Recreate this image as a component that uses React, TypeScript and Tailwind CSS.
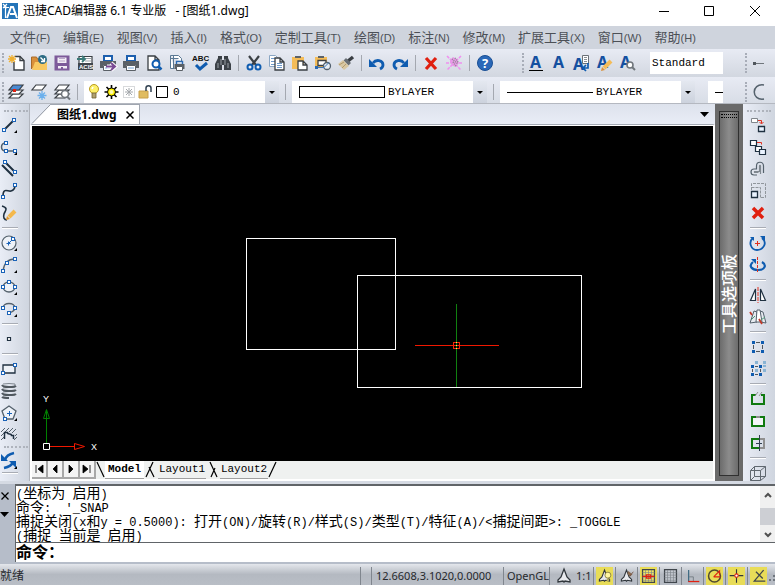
import React from 'react'
import type { ReactNode } from 'react'

const BLUE = '#0f5cb0'
const DARK = '#3a3f44'
const INK = '#1f3040'

interface Tool {
  label: string
  icon: ReactNode
}

/* ---------- shared icon pieces ---------- */

// small square grip used on the end points of the draw tools
const Node = ({ x, y }: { x: number; y: number }) => (
  <rect x={x - 1.5} y={y - 1.5} width="3" height="3" fill="#fff" stroke="#1b63b8" strokeWidth="1" />
)

const Flyout = () => <path d="M17 16v3h-3z" fill="#000" />

const Letter = ({ x = 2, y = 15 }: { x?: number; y?: number }) => (
  <text x={x} y={y} fontSize="16" fontWeight="700" fontFamily="Noto Sans, sans-serif" fill="#1450a0">
    A
  </text>
)

const PrinterBody = () => (
  <>
    <path d="M6 3h8v5H6z" fill="#fff" stroke="#1d5fae" strokeWidth="2" />
    <path d="M2 8h16v7h-3v-3H5v3H2z" fill="#5a6066" />
    <path d="M5.500 12.500h9v5h-9z" fill="#fff" stroke="#5a6066" />
    <path d="M7 15h6" stroke="#78a8d8" />
  </>
)

const Page = ({ x, y, w = 9, h = 12 }: { x: number; y: number; w?: number; h?: number }) => (
  <path
    d={`M${x} ${y}h${w - 4}l4 4v${h - 4}h-${w}zM${x + w - 4} ${y}v4h4`}
    fill="#fff"
    stroke={DARK}
    strokeWidth="1.3"
  />
)

const LayerStack = ({ top = '#fff' }: { top?: string }) => (
  <>
    <path d="M7 12h10l-4 4H3z" fill="#fff" stroke={DARK} strokeWidth="1.2" />
    <path d="M7 8h10l-4 4H3z" fill="#fff" stroke={DARK} strokeWidth="1.2" />
    <path d="M7 3h10l-4 5H3z" fill={top} stroke={DARK} strokeWidth="1.2" />
  </>
)

/* ---------- standard toolbar ---------- */

const standardTools: Tool[][] = [
  [
    {
      label: '新建',
      icon: (
        <>
          <path d="M9 3.500h5l4 4v9.500H8V9" fill="#fff" stroke={DARK} strokeWidth="1.400" />
          <path d="M14 3.500v4h4" fill="none" stroke={DARK} strokeWidth="1.400" />
          <path d="M6 2v8M2 6h8M3 3l6 6M9 3l-6 6" stroke="#f0b030" strokeWidth="1.300" />
        </>
      ),
    },
    {
      label: '打开',
      icon: (
        <>
          <path d="M2.500 16V4h5l1 2h3v5" fill="#d9903a" stroke="#a86a28" />
          <path d="M3 17l3-8h12v8z" fill="#f8c860" />
          <circle cx="13.500" cy="6.500" r="4.500" fill="#2c6b84" />
          <path d="M11.500 4.500l4 4m0-3.500v3.500h-3.500" stroke="#fff" strokeWidth="1.300" fill="none" />
        </>
      ),
    },
    {
      label: '保存',
      icon: (
        <>
          <path d="M3.500 3.500h13v13h-13z" fill="#f3edf6" stroke="#7d5a9a" strokeWidth="2" />
          <path d="M3 3h2.500v7h9V3H17v14h-2v-4H6v4H3z" fill="#7d5a9a" />
          <path d="M7 5.500h6M7 8h6" stroke="#b9a6c8" />
          <path d="M9 14h2v3H9z" fill="#7d5a9a" />
        </>
      ),
    },
    {
      label: '导入 ACIS',
      icon: (
        <>
          <path d="M4 3.500h13v13H4z" fill="#fff" stroke={DARK} strokeWidth="1.200" />
          <path d="M10 5.500h6M10 8h6" stroke="#9aa2a8" />
          <path d="M2 6h7M7 3l3 3-3 3" stroke="#3a7a78" strokeWidth="1.800" fill="none" />
          <path d="M3 10h15v7H3z" fill="#40464c" />
          <text x="4" y="16" fontSize="6" fontWeight="700" fontFamily="Liberation Sans, sans-serif" fill="#fff">
            ACIS
          </text>
        </>
      ),
    },
    {
      label: '输出',
      icon: (
        <>
          <PrinterBody />
          <path d="M9 13.500h7M13 10l4 3.500-4 3.500" stroke="#fff" strokeWidth="4" fill="none" />
          <path d="M8 13.500h8M13 10l4 3.500-4 3.500" stroke="#7a4b94" strokeWidth="2" fill="none" />
        </>
      ),
    },
    { label: '打印', icon: <PrinterBody /> },
    {
      label: '打印预览',
      icon: (
        <>
          <Page x={4} y={3} w={11} h={14} />
          <circle cx="12" cy="11" r="3.500" fill="#fff" stroke={BLUE} strokeWidth="2" />
          <path d="M14.500 13.500l3 3" stroke={BLUE} strokeWidth="2.500" />
        </>
      ),
    },
    {
      label: '页面设置',
      icon: (
        <>
          <path d="M3.500 2.500h8l3 3v3M3.500 2.500v13h4M6.500 2.500v13M3.500 5.500h8" fill="#fff" stroke="#5a7894" />
          <path d="M9.500 8.500h6v3h-6z" fill="#fff" stroke="#2b68b0" strokeWidth="1.400" />
          <path d="M7.500 11h10v5h-10z" fill="#5a6066" />
          <path d="M9.500 13.500h6v4h-6z" fill="#fff" stroke="#5a6066" />
        </>
      ),
    },
    {
      label: '拼写检查',
      icon: (
        <>
          <text x="2" y="8" fontSize="8" fontWeight="700" fontFamily="Liberation Sans, sans-serif" fill="#111">
            ABC
          </text>
          <path d="M6 12l4 4 7-6" stroke={BLUE} strokeWidth="3" fill="none" />
        </>
      ),
    },
    {
      label: '查找',
      icon: (
        <>
          <path d="M5 3h4v3H5zM11 3h4v3h-4z" fill={DARK} />
          <path d="M5 5h4v12H2v-6zM11 5h4l3 6v6h-7zM8 7h4v5H8z" fill="#3c4248" />
          <path d="M5 10v5M8 6v6M12 6v6M15 10v5" stroke="#9aa0a6" />
        </>
      ),
    },
  ],
  [
    {
      label: '剪切',
      icon: (
        <>
          <path d="M5 3l7 9M15 3l-7 9" stroke={DARK} strokeWidth="2.200" />
          <circle cx="6" cy="14" r="2.500" fill="#e8ebf4" stroke={BLUE} strokeWidth="2" />
          <circle cx="14" cy="14" r="2.500" fill="#e8ebf4" stroke={BLUE} strokeWidth="2" />
        </>
      ),
    },
    {
      label: '复制',
      icon: (
        <>
          <path d="M2.500 2.500h6l2 2v9h-8z" fill="#fff" stroke="#8aa6c4" />
          <path d="M4 5.500h4M4 8.500h4M4 11.500h4" stroke="#6f9acb" />
          <Page x={8} y={5} w={9} h={12} />
          <path d="M10 10.500h5M10 12.500h5M10 14.500h5" stroke="#6f9acb" />
        </>
      ),
    },
    {
      label: '粘贴',
      icon: (
        <>
          <path d="M2 4h12v12H2z" fill="#f4bc58" />
          <path d="M5 3h6v2H5z" fill="#5c6268" />
          <Page x={8} y={8} w={9} h={9} />
        </>
      ),
    },
    {
      label: '粘贴为块',
      icon: (
        <>
          <path d="M2 4h12v11H2z" fill="#f4bc58" />
          <path d="M5 3h6v2H5z" fill="#5c6268" />
          <path d="M5 7.500h8v5H5z" fill="#fff" stroke={DARK} strokeWidth="1.300" />
          <circle cx="14" cy="13" r="3.500" fill="#e8eef6" stroke="#52606e" strokeWidth="1.300" />
          <path d="M3 14.500h8l5-5" stroke="#3d78b8" fill="none" />
          <path d="M2 13h3v3H2z" fill="#2b68b0" />
        </>
      ),
    },
    {
      label: '特性匹配',
      icon: (
        <>
          <path d="M17 4l-5 4" stroke={DARK} strokeWidth="3.500" />
          <path d="M10 5l5 5-2.500 2.500-5-5z" fill="#686e74" />
          <path d="M7 7l6 6-5 4-6-6z" fill="#d8c7a2" />
          <path d="M3 12l5-3M6 15l4-4" stroke="#b29b6e" />
        </>
      ),
    },
  ],
  [
    {
      label: '撤销',
      icon: (
        <>
          <path d="M6 10c3-4 10-3 10 2 0 2-1 3-3 4" fill="none" stroke={BLUE} strokeWidth="2.800" />
          <path d="M2 6v8h8z" fill={BLUE} />
        </>
      ),
    },
    {
      label: '重做',
      icon: (
        <>
          <path d="M14 10c-3-4-10-3-10 2 0 2 1 3 3 4" fill="none" stroke={BLUE} strokeWidth="2.800" />
          <path d="M18 6v8h-8z" fill={BLUE} />
        </>
      ),
    },
  ],
  [
    {
      label: '删除',
      icon: <path d="M5 5l10 11M15 5L5 16" stroke="#e02010" strokeWidth="3.200" />,
    },
    {
      label: '清理',
      icon: (
        <>
          <path d="M3 3l14 14M17 3L3 17M2 10h3M15 10h3" stroke="#f090f0" strokeWidth="1.500" strokeDasharray="3 1" />
          <path d="M6 7l3-3 4 2 2 4-3 4-3-1-3-3z" fill="#e898e8" />
          <path d="M8 6l6 5M11 5l3 4M9 9l3 4" stroke="#908890" strokeWidth="1.500" strokeDasharray="1 1" />
        </>
      ),
    },
  ],
  [
    {
      label: '帮助',
      icon: (
        <>
          <circle cx="10" cy="10" r="7.500" fill="#2a68b8" stroke="#1a4f94" />
          <text x="7" y="15" fontSize="13" fontWeight="700" fontFamily="Noto Sans, sans-serif" fill="#fff">
            ?
          </text>
        </>
      ),
    },
  ],
]

const textTools: Tool[] = [
  {
    label: '多行文字',
    icon: (
      <>
        <Letter x={4} />
        <path d="M3 17.500h14" stroke="#000" />
      </>
    ),
  },
  { label: '单行文字', icon: <Letter x={4} /> },
  {
    label: '编辑文字',
    icon: (
      <>
        <Letter x={1} y={17} />
        <path d="M10.500 2.500h6v8h-6z" fill="#fff" stroke="#6a7076" />
        <path d="M12 4.500h3M12 6.500h3M12 8.500h3" stroke="#8a9096" />
        <path d="M16 10v5h-4m2-3l-3 3 3 3" stroke={BLUE} strokeWidth="1.700" fill="none" />
      </>
    ),
  },
  {
    label: '文字样式',
    icon: (
      <>
        <Letter x={2} />
        <path d="M16 8l-7 7" stroke="#f4bc58" strokeWidth="4" />
        <path d="M6 18l1-4 3 3z" fill="#d9903a" />
      </>
    ),
  },
  {
    label: '查找文字',
    icon: (
      <>
        <Letter x={2} />
        <circle cx="12" cy="12" r="3" fill="#fff" stroke="#70767c" strokeWidth="1.600" />
        <path d="M14 14l3 3" stroke="#70767c" strokeWidth="2" />
      </>
    ),
  },
]

const layerTools: Tool[] = [
  {
    label: '图层',
    icon: (
      <>
        <LayerStack top="#4a8ad4" />
        <path d="M7 7h3v3H7z" fill="#e02010" />
      </>
    ),
  },
  {
    label: '冻结图层',
    icon: (
      <>
        <path d="M7 3h10l-4 5H3z" fill="#fff" stroke={DARK} strokeWidth="1.200" />
        <path d="M13 9v9M8.500 13.500h9M10 10.500l6 6M16 10.500l-6 6" stroke="#6cb0ec" strokeWidth="1.300" />
      </>
    ),
  },
  {
    label: '图层查找',
    icon: (
      <>
        <LayerStack />
        <circle cx="13" cy="12" r="3.500" fill="#fff" stroke="#70767c" strokeWidth="1.600" />
        <path d="M15 14.500l3 3" stroke="#70767c" strokeWidth="2" />
      </>
    ),
  },
]

/* ---------- draw / modify side bars ---------- */

const drawTools: Tool[][] = [
  [
    {
      label: '直线',
      icon: (
        <>
          <path d="M4 16L14 6" stroke={INK} strokeWidth="2" />
          <Node x={4} y={16} />
          <Node x={14} y={6} />
          <Flyout />
        </>
      ),
    },
    {
      label: '多段线',
      icon: (
        <>
          <path d="M6 7C0 7 0 15 6 15h9" fill="none" stroke="#50606e" strokeWidth="1.500" />
          <Node x={6} y={7} />
          <Node x={6} y={15} />
          <Node x={15} y={15} />
          <Flyout />
        </>
      ),
    },
    {
      label: '多线',
      icon: (
        <>
          <path d="M2 7l11 11M5 4l10 10" stroke={INK} strokeWidth="2" />
          <Node x={5} y={4} />
          <Node x={15} y={14} />
        </>
      ),
    },
    {
      label: '样条曲线',
      icon: (
        <>
          <path d="M3 16c0-9 5-4 8-5 4-1 4-4 4-6" fill="none" stroke={INK} strokeWidth="1.600" />
          <Node x={3} y={17} />
          <Node x={15} y={5} />
        </>
      ),
    },
    {
      label: '徒手画',
      icon: (
        <>
          <path d="M2 4c7 2 3 5 2 8-1 3 0 6 3 6" fill="none" stroke={INK} strokeWidth="1.600" />
          <path d="M15 9l-6 6" stroke="#f4b84c" strokeWidth="4" />
          <path d="M6 18l1-4 3 3z" fill="#e0962c" />
        </>
      ),
    },
  ],
  [
    {
      label: '圆',
      icon: (
        <>
          <circle cx="9" cy="11" r="7" fill="#eef2f8" stroke="#54616c" strokeWidth="1.200" />
          <path d="M9 11l4-4M6.500 11.500h4M8.500 9.500v4" stroke="#1b63b8" />
          <Node x={13} y={7} />
          <Flyout />
        </>
      ),
    },
    {
      label: '圆弧',
      icon: (
        <>
          <path d="M3 17C4 9 8 5 15 5" fill="none" stroke="#54616c" strokeWidth="1.300" />
          <Node x={3} y={17} />
          <Node x={7} y={9} />
          <Node x={15} y={5} />
          <Flyout />
        </>
      ),
    },
    {
      label: '椭圆',
      icon: (
        <>
          <ellipse cx="9" cy="11" rx="6" ry="5" fill="#eef2f8" stroke="#54616c" strokeWidth="1.300" />
          <Node x={3} y={11} />
          <Node x={15} y={11} />
          <Node x={9} y={6} />
          <Flyout />
        </>
      ),
    },
    {
      label: '椭圆弧',
      icon: (
        <>
          <path d="M3 10C3 4 15 4 15 10c0 3-3 4-6 5" fill="none" stroke="#54616c" strokeWidth="1.300" />
          <Node x={3} y={10} />
          <Node x={15} y={10} />
          <Node x={9} y={15} />
          <Flyout />
        </>
      ),
    },
  ],
  [{ label: '点', icon: <path d="M7.500 9.500h3v3h-3z" fill="#fff" stroke={INK} strokeWidth="1.200" /> }],
  [
    {
      label: '矩形',
      icon: (
        <>
          <path d="M3 7h12v8H3z" fill="#eef2f8" stroke={INK} strokeWidth="1.300" />
          <Node x={3} y={15} />
          <Node x={15} y={7} />
        </>
      ),
    },
    {
      label: '螺旋',
      icon: (
        <>
          <path d="M3 4q6-1 12 0v2M15 7l-12 1M15 11l-12 1M15 15l-12 1" stroke="#808890" fill="none" />
          <path
            d="M2 5q1 2 7 2t7-1M2 9q1 2 7 2t7-1M2 13q1 2 7 2t7-1M2 17q1 1 7 1"
            stroke="#50585f"
            strokeWidth="2"
            fill="none"
          />
        </>
      ),
    },
    {
      label: '多边形',
      icon: (
        <>
          <path d="M9 4l7 5-3 8H5L2 9z" fill="#eef2f8" stroke="#54616c" strokeWidth="1.300" />
          <path d="M7 11.500h5M9.500 9v5" stroke="#1b63b8" />
          <Node x={5} y={17} />
          <Flyout />
        </>
      ),
    },
    {
      label: '图案填充',
      icon: (
        <>
          <path d="M1 8l4-4M1 12l8-8M1 16l3-3M9 8l4-4M12 9l4-4M15 12l2-2M14 16l3-3" stroke="#54616c" />
          <path d="M4.500 15V8.500h3c0 3 4 0 4 3h2V15" fill="none" stroke={INK} strokeWidth="1.500" />
        </>
      ),
    },
  ],
]

const syncTool: Tool = {
  label: '重生成',
  icon: (
    <>
      <path d="M5 10c1-4 4-6 9-7" fill="none" stroke={BLUE} strokeWidth="2.500" />
      <path d="M1 4v7h7z" fill={BLUE} />
      <path d="M13 12c-1 3-4 5-9 6" fill="none" stroke={BLUE} strokeWidth="2.500" />
      <path d="M16 18v-7h-7z" fill={BLUE} />
      <path d="M17 16v3h-3z" fill="#000" />
    </>
  ),
}

const modifyTools: Tool[][] = [
  [
    {
      label: '复制对象',
      icon: (
        <>
          <path d="M3.500 4.500h6v4h-6z" fill="#fff" stroke="#80868c" />
          <path d="M10 6.500h3.500v3M11.500 8l2 2 2-2" fill="none" stroke="#e03020" />
          <path d="M10.500 12.500h6v5h-6z" fill="#eaf3ff" stroke={INK} strokeWidth="1.300" />
        </>
      ),
    },
    {
      label: '多重复制',
      icon: (
        <>
          <path d="M2.500 4.500h6v5h-6z" fill="#fff" stroke={INK} strokeWidth="1.200" />
          <path d="M9 6.500h4.500v2" fill="none" stroke="#e03020" />
          <path d="M7.500 10.500h6v5h-6z" fill="#fff" stroke={INK} strokeWidth="1.200" />
          <path d="M11.500 13.500h6v5h-6z" fill="#eaf3ff" stroke={INK} strokeWidth="1.200" />
        </>
      ),
    },
    {
      label: '偏移',
      icon: (
        <>
          <path d="M15.500 15V8c0-5-7-5-7 0v3H6c-4 0-4 6 0 6h3" fill="none" stroke="#54616c" strokeWidth="1.200" />
          <path d="M12.500 16V8c0-1-1-1-1 0v5.500H6.500v1h4" fill="none" stroke="#808890" strokeWidth="1.200" />
        </>
      ),
    },
    {
      label: '缩放',
      icon: (
        <>
          <path d="M3.500 10V3.500h14v14H12M3.500 7.500h9v10" fill="none" stroke="#90969c" strokeDasharray="3 1" />
          <path d="M3.500 11.500h6v6h-6z" fill="#eaf3ff" stroke={INK} strokeWidth="1.300" />
        </>
      ),
    },
    {
      label: '删除对象',
      icon: <path d="M5 6l10 10M15 6L5 16" stroke="#e02010" strokeWidth="3.500" />,
    },
  ],
  [
    {
      label: '旋转',
      icon: (
        <>
          <path d="M5 6c-5 4-2 12 4 12s11-7 5-12" fill="none" stroke={BLUE} strokeWidth="1.800" />
          <path d="M12 4h5v5zM2 5h4v4z" fill={BLUE} />
          <path d="M7 11.500h5M9.500 9v5" stroke="#e03020" />
        </>
      ),
    },
    {
      label: '三维旋转',
      icon: (
        <>
          <path d="M5 8c-5 4-1 8 5 8 7 0 9-5 4-8" fill="none" stroke={BLUE} strokeWidth="2.200" />
          <path d="M3 5h5v5z" fill={BLUE} />
          <path d="M9.500 3v16" stroke="#e03020" strokeDasharray="3 1" />
        </>
      ),
    },
  ],
  [
    {
      label: '镜像',
      icon: (
        <>
          <path d="M7.500 5v11.500h-5zM12.500 5v11.500h5z" fill="#fff" stroke={INK} strokeWidth="1.200" />
          <path d="M10 3v16" stroke="#e03020" strokeDasharray="4 1" />
        </>
      ),
    },
    {
      label: '三维镜像',
      icon: (
        <>
          <path d="M6 5l3 1v10l-7 1zM12 5l3 1 3 11-6-1z" fill="#e6eaf0" stroke="#54616c" />
          <path d="M9 4h3l2 12H8z" fill="#fff" stroke="#54616c" />
          <path d="M2 6l2 3M11 13l3 5" stroke="#c03a2a" strokeWidth="1.800" />
          <path d="M3 14l4-4M13 14l4-3" stroke="#4d9a78" />
        </>
      ),
    },
  ],
  [
    {
      label: '阵列',
      icon: (
        <>
          <path d="M8 6.500h4M8 15.500h4M5.500 9v4M14.500 9v4" stroke="#50565c" />
          <path d="M4 5h3v3H4zM13 5h3v3h-3zM4 14h3v3H4zM13 14h3v3h-3z" fill={BLUE} />
        </>
      ),
    },
    {
      label: '三维阵列',
      icon: (
        <>
          <path d="M7 3h3v3H7zM15 3h3v3h-3zM7 11h3v3H7zM15 11h3v3h-3zM15 7h3v2h-3z" fill="#8ab4d4" />
          <path d="M3 7h3v3H3zM11 7h3v3h-3zM3 15h3v3H3zM11 15h3v3h-3z" fill={BLUE} />
          <path d="M7 8.500h3M7 16.500h3M4.500 11v3M12.500 11v3" stroke="#50565c" />
        </>
      ),
    },
  ],
  [
    {
      label: '打断',
      icon: (
        <>
          <path d="M8 7H4v9h12V7h-3" fill="none" stroke="#107a10" strokeWidth="2" />
          <path d="M7 8l3-4M11 8l3-4" stroke="#909090" />
        </>
      ),
    },
    {
      label: '合并',
      icon: (
        <>
          <path d="M4 7h12v9H4z" fill="#f4f6f8" stroke="#107a10" strokeWidth="2" />
          <path d="M8 7h4" stroke="#909090" strokeWidth="2" />
        </>
      ),
    },
    {
      label: '修剪',
      icon: (
        <>
          <path d="M12 7h4v9h-4" fill="none" stroke="#909090" strokeWidth="2" />
          <path d="M11 7H4v9h7" fill="none" stroke="#107a10" strokeWidth="2" />
          <path d="M11.500 3v16M8 11.500h6" stroke="#304050" />
        </>
      ),
    },
  ],
  [
    {
      label: '长方体',
      icon: (
        <path
          d="M2.500 8.500h10v10h-10zM2.500 8.500l4-4h11l-5 4M17.500 4.500v10l-5 4M6.500 4.500v10h11M6.500 14.500l-4 4"
          fill="none"
          stroke="#606870"
        />
      ),
    },
  ],
]

/* ---------- status bar toggles ---------- */

const Compass = () => (
  <path d="M10 3l3 8 3 3v2l-5-1-1 1-1-1-5 1v-2l3-3z" fill="#e8eaee" stroke="#30363c" strokeWidth="1.300" />
)

const Mesh = ({ fill }: { fill: string }) => (
  <>
    <path d="M3 2.500h14v15H3z" fill={fill} stroke="#40464c" strokeWidth="1.500" />
    <path d="M6.500 3v14M10 3v14M13.500 3v14M3 6h14M3 9h14M3 12h14M3 15h14" stroke="#80868c" strokeWidth="0.800" />
  </>
)

const toggles: (Tool & { on: boolean })[] = [
  {
    label: '注释可见性',
    on: true,
    icon: (
      <>
        <Compass />
        <circle cx="14" cy="9" r="3.500" fill="#fff6a0" stroke="#80763a" />
        <path d="M12.500 13h3v3h-3z" fill="#b0a860" />
      </>
    ),
  },
  {
    label: '自动缩放',
    on: false,
    icon: (
      <>
        <Compass />
        <path d="M12 4l5 4-3 3-3-4z" fill="#8a6a50" />
        <path d="M14 10l4-5" stroke="#705040" />
      </>
    ),
  },
  {
    label: '捕捉',
    on: true,
    icon: (
      <>
        <Mesh fill="#f4ea60" />
        <path d="M3 10.500h14M7.500 8.500h5v4h-5z" fill="none" stroke="#e02010" strokeWidth="1.300" />
      </>
    ),
  },
  { label: '栅格', on: false, icon: <Mesh fill="#c4c9d0" /> },
  {
    label: '正交',
    on: false,
    icon: (
      <>
        <path d="M5.500 3v14" stroke="#30607a" strokeWidth="1.300" />
        <path d="M6 11h5v5" fill="none" stroke="#707880" />
        <path d="M5 16.500h13" stroke="#e02010" strokeWidth="1.500" />
      </>
    ),
  },
  {
    label: '极轴',
    on: true,
    icon: (
      <>
        <circle cx="10" cy="10" r="7" fill="none" stroke="#504a30" strokeWidth="1.800" />
        <path d="M9 11h8M9 11l7-7v5" stroke="#e02010" strokeWidth="1.300" fill="none" />
      </>
    ),
  },
  {
    label: '对象捕捉',
    on: true,
    icon: (
      <>
        <path d="M10 2v16M2 9.500h16" stroke="#30363c" strokeWidth="1.300" />
        <circle cx="10" cy="9.500" r="2" fill="#fff" stroke="#e02010" strokeWidth="1.200" />
      </>
    ),
  },
  {
    label: '对象追踪',
    on: true,
    icon: <path d="M16 3L5 16h13M7 5l8 8" fill="none" stroke="#40464c" strokeWidth="1.500" />,
  },
]

const menus = [
  ['文件', 'F'],
  ['编辑', 'E'],
  ['视图', 'V'],
  ['插入', 'I'],
  ['格式', 'O'],
  ['定制工具', 'T'],
  ['绘图', 'D'],
  ['标注', 'N'],
  ['修改', 'M'],
  ['扩展工具', 'X'],
  ['窗口', 'W'],
  ['帮助', 'H'],
]

/* ---------- small components ---------- */

const VGrip = () => <span className="ml-[2px] h-5 w-[2px] shrink-0 border-l-2 border-dotted border-[#a8adb8]" />
const HGrip = () => <span className="ml-1 h-1 w-6 shrink-0 border-t-2 border-dotted border-[#aeb3bc]" />
const VSep = () => (
  <span className="flex w-2 shrink-0 justify-center">
    <span className="h-4 w-px bg-[#a4a8b0]" />
  </span>
)

function ToolButton({ tool }: { tool: Tool }) {
  return (
    <button type="button" aria-label={tool.label} className="flex h-6 w-[23px] shrink-0 items-center justify-center">
      <svg viewBox="0 0 20 20" className="size-5 shrink-0 overflow-visible">
        {tool.icon}
      </svg>
    </button>
  )
}

function SideButton({ tool }: { tool: Tool }) {
  return (
    <button type="button" aria-label={tool.label} className="block h-[22px] w-5 shrink-0">
      <svg viewBox="0 0 20 22" className="h-[22px] w-5">
        {tool.icon}
      </svg>
    </button>
  )
}

function SideGroups({ groups }: { groups: Tool[][] }) {
  return (
    <>
      {groups.map((group, i) => (
        <React.Fragment key={i}>
          {i > 0 && (
            <span className="flex h-2 shrink-0 items-center pl-[2px]">
              <span className="h-[2px] w-4 border-t border-[#a8acb4] bg-white" />
            </span>
          )}
          {group.map((tool) => (
            <SideButton key={tool.label} tool={tool} />
          ))}
        </React.Fragment>
      ))}
    </>
  )
}

function Combo({ label, value, children }: { label: string; value: string; children?: ReactNode }) {
  return (
    <div className="relative flex h-[22px] w-[195px] shrink-0 items-center bg-white">
      {children}
      <select
        aria-label={label}
        className="h-full min-w-0 flex-1 appearance-none bg-transparent pl-[3px] font-['Liberation_Mono',monospace] text-[11px] text-black"
      >
        <option>{value}</option>
      </select>
      <span className="pointer-events-none absolute inset-y-0 right-0 flex w-[14px] items-center justify-center bg-linear-to-b from-[#e4e8f0] to-[#ccd2dd]">
        <svg viewBox="0 0 6 3" className="h-[3px] w-[6px]">
          <path d="M0 0h6L3 3z" fill="#000" />
        </svg>
      </span>
    </div>
  )
}

function TitleBar() {
  return (
    <header className="flex h-[22px] items-center bg-white">
      <svg viewBox="0 0 18 18" className="ml-px size-[18px]">
        <path d="M1 1h16v16H1z" fill="#2474b8" />
        <path d="M2 5.500h6M4.500 5v11M2 2l4 4M6 2L2 6" stroke="#fff" strokeWidth="1.200" />
        <path d="M6 16l4-11h2l4 11M9 12h5" stroke="#fff" strokeWidth="2" fill="none" />
      </svg>
      <h1 className="ml-1 text-xs whitespace-pre text-black">迅捷CAD编辑器 6.1 专业版   - [图纸1.dwg]</h1>
      <div className="ml-auto flex">
        <button type="button" aria-label="最小化" className="flex h-5 w-[45px] items-center justify-center">
          <svg viewBox="0 0 10 10" className="size-[10px]">
            <path d="M0 5.500h10" stroke="#000" />
          </svg>
        </button>
        <button type="button" aria-label="最大化" className="flex h-5 w-[45px] items-center justify-center">
          <svg viewBox="0 0 10 10" className="size-[10px]">
            <path d="M0.500 0.500h9v9h-9z" fill="none" stroke="#000" />
          </svg>
        </button>
        <button type="button" aria-label="关闭" className="ml-1 flex h-5 w-10 items-center justify-center">
          <svg viewBox="0 0 10 10" className="size-[10px]">
            <path d="M0 0l10 10M10 0L0 10" stroke="#000" />
          </svg>
        </button>
      </div>
    </header>
  )
}

function MenuBar() {
  return (
    <nav className="flex h-[23px] items-center gap-[13px] bg-[#cfd4dd] pl-[10px] text-[#4c5056]">
      {menus.map(([name, key]) => (
        <button key={name} type="button" className="shrink-0 text-[13px] leading-5">
          {name}
          <span className="font-['Liberation_Sans',sans-serif] text-[11px]">({key})</span>
        </button>
      ))}
    </nav>
  )
}

function Toolbars() {
  return (
    <div className="overflow-hidden bg-[#dfe3ec]">
      <div className="flex h-7 items-center bg-linear-to-b from-[#e8ebf4] to-[#d2d7e0]">
        <VGrip />
        {standardTools.map((group, i) => (
          <React.Fragment key={i}>
            {i > 0 && <VSep />}
            {group.map((tool) => (
              <ToolButton key={tool.label} tool={tool} />
            ))}
          </React.Fragment>
        ))}
        <span className="w-6 shrink-0" />
        <VGrip />
        {textTools.map((tool) => (
          <ToolButton key={tool.label} tool={tool} />
        ))}
        <input
          aria-label="文字样式名"
          defaultValue="Standard"
          className="ml-[11px] h-[22px] w-[73px] shrink-0 bg-white pl-[2px] font-['Liberation_Mono',monospace] text-[11px] text-black"
        />
        <span className="w-5 shrink-0" />
        <VGrip />
        <svg viewBox="0 0 12 20" className="ml-[6px] h-5 w-3 shrink-0">
          <path d="M0 10.500h11" stroke="#70767c" />
          <path d="M0 9h3v3H0z" fill="#50565c" />
        </svg>
      </div>
      <div className="flex h-[26px] items-center bg-linear-to-b from-[#e8ebf4] to-[#d8dde6] pt-1">
        <VGrip />
        {layerTools.map((tool) => (
          <ToolButton key={tool.label} tool={tool} />
        ))}
        <VSep />
        <span className="w-[3px] shrink-0" />
        <Combo label="图层" value="0">
          <svg viewBox="0 0 86 20" className="h-5 w-[86px] shrink-0">
            <circle cx="10" cy="7" r="4.500" fill="#fdf06a" stroke="#b89a20" />
            <path d="M8 11h4v5H8z" fill="#b0a070" stroke="#706030" strokeWidth="0.800" />
            <path d="M9 5l-1 2" stroke="#fff" strokeWidth="1.500" />
            <path d="M27.500 3v14M20.500 10h14M22.500 5l10 10M32.500 5l-10 10" stroke="#000" strokeWidth="1.600" />
            <circle cx="27.500" cy="10" r="4" fill="#fff200" stroke="#000" />
            <circle cx="27.500" cy="10" r="2" fill="#fffbb0" />
            <path d="M45 6v8M41 10h8M42 7l6 6M48 7l-6 6" stroke="#a4a8ac" />
            <path d="M39.500 4.500h11v11h-11z" fill="none" stroke="#b0b4b8" strokeDasharray="1 1" />
            <path d="M55 9h9v7h-9z" fill="#e0bc60" stroke="#c8a04a" />
            <path d="M62 9V6c0-3 5-3 5 0v4" fill="none" stroke="#304050" strokeWidth="1.500" />
            <path d="M72.500 4.500h11v11h-11z" fill="#fff" stroke="#000" />
          </svg>
        </Combo>
        <span className="w-[2px] shrink-0" />
        <VSep />
        <span className="w-[3px] shrink-0" />
        <Combo label="颜色" value="BYLAYER">
          <span className="ml-[7px] h-3 w-[86px] shrink-0 border border-black" />
        </Combo>
        <span className="w-[2px] shrink-0" />
        <VSep />
        <span className="w-[3px] shrink-0" />
        <Combo label="线型" value="BYLAYER">
          <span className="ml-[7px] h-px w-[86px] shrink-0 bg-black" />
        </Combo>
        <span className="ml-[13px] flex h-[22px] w-[15px] shrink-0 items-center justify-end bg-white">
          <span className="h-px w-2 bg-black" />
        </span>
        <span className="w-5 shrink-0" />
        <VGrip />
        <svg viewBox="0 0 12 20" className="ml-[6px] h-5 w-3 shrink-0">
          <path d="M11 3C-2 1-2 19 11 17" fill="none" stroke="#54616c" strokeWidth="1.500" />
        </svg>
      </div>
    </div>
  )
}

function DrawingCanvas() {
  return (
    <div className="relative flex-1 overflow-hidden bg-black">
      <svg className="absolute inset-0 size-full" shapeRendering="crispEdges" fill="none">
        <path d="M214.500 112.500h149v111h-149z" stroke="#fff" />
        <path d="M325.500 149.500h224v112h-224z" stroke="#fff" />
        <path d="M424.500 178v83" stroke="#108010" />
        <path d="M383 219.500h84" stroke="#f01800" />
        <path d="M421.500 216.500h6v6h-6z" stroke="#f02808" />
        <path d="M424 216.500h1M424 219.500h1M424 222.500h1" stroke="#ffe060" />
      </svg>
      <svg viewBox="0 0 75 75" className="absolute bottom-0 left-0 size-[75px]" fill="none">
        <path d="M14.500 57V24" stroke="#008000" />
        <path d="M14.500 23.500l3 9h-6z" stroke="#008000" />
        <path d="M18 60.500h24" stroke="#f01800" />
        <path d="M52.500 60.500l-10-3v6z" stroke="#f01800" />
        <path d="M11.500 57.500h6v6h-6z" stroke="#fff" />
        <text x="11" y="16" fontSize="9" fontFamily="Liberation Sans, sans-serif" fill="#fff">
          Y
        </text>
        <text x="59" y="64" fontSize="9" fontFamily="Liberation Sans, sans-serif" fill="#fff">
          X
        </text>
      </svg>
    </div>
  )
}

const navPaths = ['M2 1v8M9 1L4 5l5 4z', 'M7 1L3 5l4 4z', 'M3 1l4 4-4 4z', 'M8 1v8M1 1l5 4-5 4z']
const navLabels = ['第一个', '上一个', '下一个', '最后一个']

// slanted edges between the sheet tabs
function TabEdge({ d, wide }: { d: string; wide?: boolean }) {
  return (
    <svg viewBox={wide ? '0 0 14 18' : '0 0 9 18'} className={wide ? 'h-[18px] w-[14px] shrink-0' : 'h-[18px] w-[9px] shrink-0'}>
      <path d={d} fill="none" stroke="#000" strokeWidth="1.200" />
    </svg>
  )
}

function LayoutTabs() {
  return (
    <div className="flex h-[18px] shrink-0 items-stretch bg-[#eff1f0] font-['Liberation_Mono',monospace] text-[11px] text-black">
      {navPaths.map((d, i) => (
        <button
          key={d}
          type="button"
          aria-label={navLabels[i]}
          className="flex w-4 items-center justify-center border-r-2 border-b-2 border-[#a8a8a8] bg-[#f4f4f4]"
        >
          <svg viewBox="0 0 10 10" className="size-[10px]">
            <path d={d} fill="#000" stroke="#000" strokeWidth="0.800" />
          </svg>
        </button>
      ))}
      <TabEdge d="M1 1l7 15" />
      <button type="button" className="w-[39px] border-b border-[#a0a0a0] bg-white font-bold">
        Model
      </button>
      <TabEdge wide d="M9 1L2 16M5 6l5 10" />
      <button type="button" className="w-12 border-b border-[#a0a0a0]">
        Layout1
      </button>
      <TabEdge wide d="M9 7L5 16M4 1l7 15" />
      <button type="button" className="w-12 border-b border-[#a0a0a0]">
        Layout2
      </button>
      <TabEdge d="M8 1L1 16" />
    </div>
  )
}

function Workspace() {
  return (
    <main className="flex min-h-0 flex-1 border-t border-[#b4b8c0] bg-[#dfe3ec]">
      <aside className="flex w-[30px] shrink-0 flex-col overflow-hidden border-r border-[#b0b4bc] bg-linear-to-r from-[#e9edf6] to-[#cfd5df] pt-[6px]">
        <HGrip />
        <SideGroups groups={drawTools} />
        <HGrip />
        <SideButton tool={syncTool} />
        <span className="ml-[2px] h-[2px] w-4 shrink-0 border-t border-[#a8acb4] bg-white" />
      </aside>

      <section className="flex min-w-0 flex-1 flex-col">
        <div className="flex h-5 shrink-0 items-stretch bg-linear-to-b from-[#dde2ec] to-[#e9edf6]">
          <svg viewBox="0 0 20 20" className="h-5 w-5 shrink-0">
            <path d="M2 20L20 1v19z" fill="#fff" />
            <path d="M2 19.500L20 1" stroke="#9096a0" fill="none" />
          </svg>
          <div className="flex items-center gap-2 border-t border-r border-[#a0a6b0] bg-white pr-1 pl-[7px]">
            <span className="text-xs font-bold text-black">图纸1.dwg</span>
            <button type="button" aria-label="关闭图纸" className="flex size-[10px] items-center justify-center">
              <svg viewBox="0 0 8 8" className="size-2">
                <path d="M0.500 0.500l7 7M7.500 0.500l-7 7" stroke="#000" strokeWidth="1.500" />
              </svg>
            </button>
          </div>
          <button type="button" aria-label="图纸列表" className="mr-[5px] ml-auto px-[1px]">
            <svg viewBox="0 0 9 5" className="h-[5px] w-[9px]">
              <path d="M0 0h9L4.500 5z" fill="#000" />
            </svg>
          </button>
        </div>
        <div className="flex min-h-0 flex-1 flex-col border-x-2 border-t border-white border-t-[#a4aab4] bg-white pt-px">
          <DrawingCanvas />
          <LayoutTabs />
        </div>
        <div className="h-[2px] bg-white" />
      </section>

      <aside className="flex w-[28px] shrink-0 flex-col bg-[#6a6a6a] px-1 pt-[7px] pb-[5px]">
        <div className="flex flex-1 flex-col items-center justify-center border border-[#303030] bg-linear-to-r from-[#6c6c6c] via-[#8c8c8c] to-[#6c6c6c]">
          <span className="mt-[2px] mb-auto h-1 w-4 border-y border-dotted border-black" />
          <span className="rotate-180 text-base leading-5 font-medium text-white [text-orientation:sideways] [writing-mode:vertical-rl]">
            工具选项板
          </span>
          <span className="mt-auto h-1" />
        </div>
      </aside>

      <aside className="flex w-8 shrink-0 flex-col overflow-hidden bg-linear-to-r from-[#e9edf6] to-[#cfd5df] pt-[6px]">
        <HGrip />
        <div className="flex flex-col pl-[5px]">
          <SideGroups groups={modifyTools} />
        </div>
      </aside>
    </main>
  )
}

// Latin runs in the console are set a size below the CJK text
const Mono = ({ children }: { children: ReactNode }) => <span className="text-xs leading-[14px]">{children}</span>

function CommandPanel() {
  return (
    <section className="mt-[3px] flex shrink-0 bg-[#b6bdc9] pb-[2px]">
      <div className="flex w-[15px] shrink-0 flex-col items-center gap-3 pt-2 pr-[6px]">
        <button type="button" aria-label="关闭命令行">
          <svg viewBox="0 0 8 8" className="block size-2">
            <path d="M0.500 0.500l7 7M7.500 0.500l-7 7" stroke="#000" strokeWidth="1.300" />
          </svg>
        </button>
        <button type="button" aria-label="命令行菜单">
          <svg viewBox="0 0 9 5" className="block h-[5px] w-[9px]">
            <path d="M0 0h9L4.500 5z" fill="#000" />
          </svg>
        </button>
      </div>
      <div className="min-w-0 flex-1 border-t-2 border-l border-[#606468] bg-white font-['Liberation_Mono','Noto_Sans_CJK_SC',monospace] text-black">
        <div className="flex h-14">
          <div className="grid min-w-0 flex-1 auto-rows-[14px] pt-px text-sm leading-[14px] whitespace-pre">
            <p>
              <Mono>(</Mono>坐标为<Mono> </Mono>启用<Mono>)</Mono>
            </p>
            <p>
              命令<Mono>:  '_SNAP</Mono>
            </p>
            <p>
              捕捉关闭<Mono>(x</Mono>和<Mono>y = 0.5000): </Mono>打开<Mono>(ON)/</Mono>旋转<Mono>(R)/</Mono>样式
              <Mono>(S)/</Mono>类型<Mono>(T)/</Mono>特征<Mono>(A)/&lt;</Mono>捕捉间距<Mono>&gt;: _TOGGLE</Mono>
            </p>
            <p>
              <Mono>(</Mono>捕捉<Mono> </Mono>当前是<Mono> </Mono>启用<Mono>)</Mono>
            </p>
          </div>
          <div className="flex w-[15px] shrink-0 flex-col items-center bg-[#f0f0f0] py-1">
            <svg viewBox="0 0 8 6" className="mt-[2px] h-[6px] w-2">
              <path d="M1 5l3-3 3 3" fill="none" stroke="#505050" strokeWidth="2" />
            </svg>
            <span className="mt-[10px] h-[17px] w-full bg-[#cdcfd4]" />
            <svg viewBox="0 0 8 6" className="mt-auto h-[6px] w-2">
              <path d="M1 1l3 3 3-3" fill="none" stroke="#505050" strokeWidth="2" />
            </svg>
          </div>
        </div>
        <div className="flex h-5 items-end border-t border-[#606468]">
          <label htmlFor="cmd" className="text-base leading-4 font-bold">
            命令：
          </label>
          <input id="cmd" className="h-full min-w-0 flex-1 outline-none" />
        </div>
      </div>
    </section>
  )
}

function StatusBar() {
  return (
    <footer className="flex h-[21px] shrink-0 items-stretch bg-linear-to-b from-[#e4e7ec] via-[#b4b9c1] to-[#b9bec6] pt-[3px] text-xs text-[#26292d]">
      <span className="flex flex-1 items-center">就绪</span>
      <span className="w-[11px] border-l border-[#80868e]" />
      <span className="flex w-[132px] items-center border-l border-[#80868e] pl-1 text-[11px]">
        12.6608,3.1020,0.0000
      </span>
      <button type="button" className="flex w-[46px] items-center border-l border-[#80868e] pl-[3px] text-[11px]">
        OpenGL
      </button>
      <button type="button" className="flex w-11 items-center gap-[2px] border-l border-[#80868e] pl-1 text-[11px]">
        <svg viewBox="0 0 20 20" className="size-5">
          <Compass />
        </svg>
        1:1
      </button>
      {toggles.map(({ label, icon, on }) => (
        <button
          key={label}
          type="button"
          aria-label={label}
          aria-pressed={on}
          className="flex w-[22px] items-center justify-center border-l border-[#80868e] px-[2px]"
        >
          <svg viewBox="0 0 20 20" className={on ? 'size-[18px] bg-[#e8dc58]' : 'size-[18px]'}>
            {icon}
          </svg>
        </button>
      ))}
      <svg viewBox="0 0 6 18" className="w-[6px]">
        <path d="M4 8h2v2H4zM4 12h2v2H4zM0 12h2v2H0z" fill="#70767e" />
      </svg>
    </footer>
  )
}

export default function App() {
  return (
    <div className="flex h-screen flex-col overflow-hidden bg-[#d5dae3] font-['Noto_Sans','Noto_Sans_CJK_SC',sans-serif]">
      <div className="bg-white pb-1">
        <TitleBar />
      </div>
      <MenuBar />
      <Toolbars />
      <Workspace />
      <CommandPanel />
      <StatusBar />
    </div>
  )
}
